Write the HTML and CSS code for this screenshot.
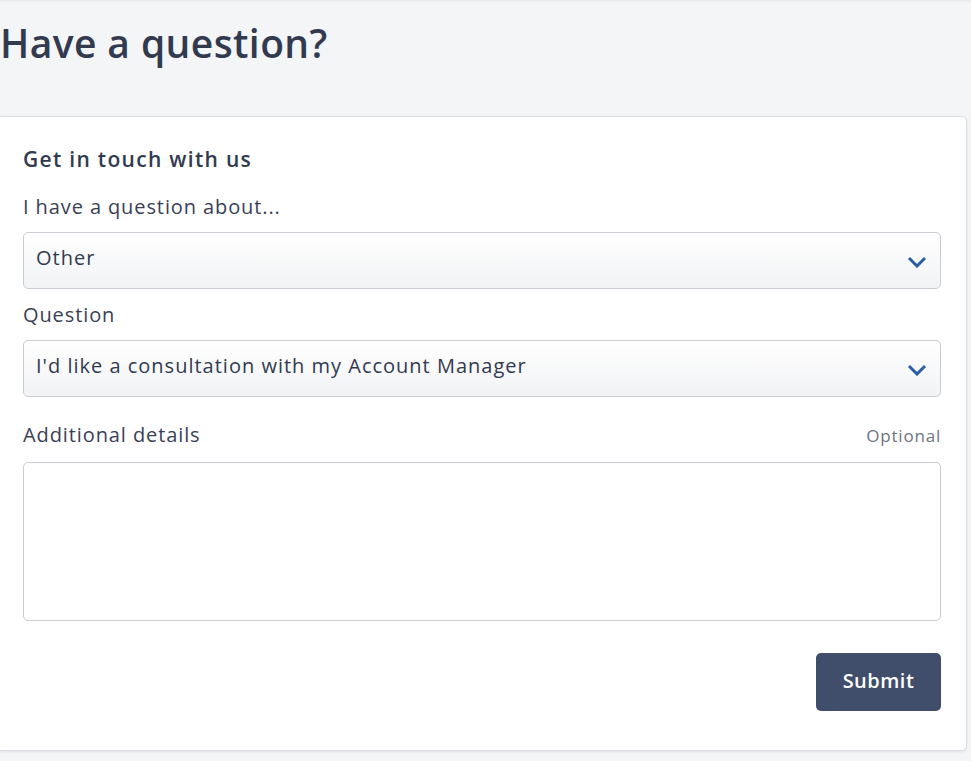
FILE: index.html
```html
<!DOCTYPE html>
<html>
<head>
<meta charset="utf-8">
<link rel="stylesheet" href="styles.css">
</head>
<body>
<div class="page">
  <h1 class="title">Have a question?</h1>
  <form class="card">
    <h2 class="card-title">Get in touch with us</h2>
    <label class="label">I have a question about...</label>
    <div class="select">
      <span>Other</span>
      <svg class="chev" width="20" height="12" viewBox="0 0 20 12"><path d="M2 2 L10 10 L18 2" fill="none" stroke="#2a5caa" stroke-width="3"/></svg>
    </div>
    <label class="label">Question</label>
    <div class="select">
      <span>I'd like a consultation with my Account Manager</span>
      <svg class="chev" width="20" height="12" viewBox="0 0 20 12"><path d="M2 2 L10 10 L18 2" fill="none" stroke="#2a5caa" stroke-width="3"/></svg>
    </div>
    <div class="label-row">
      <label class="label">Additional details</label>
      <span class="optional">Optional</span>
    </div>
    <div class="textarea"></div>
    <div class="actions">
      <button type="button" class="submit">Submit</button>
    </div>
  </form>
</div>
</body>
</html>
```

FILE: styles.css
```css
html, body {
  margin: 0;
  padding: 0;
}
body {
  background: #f4f5f7;
  font-family: "Open Sans", "Noto Sans", sans-serif;
  color: #333b52;
  box-shadow: inset 0 2px 2px -1px rgba(0,0,0,0.08);
  min-height: 761px;
}
.page {
  margin-left: -3px;
  width: 971px;
  padding-top: 18px;
}
.title {
  margin: 0 0 48px 3px;
  font-size: 39px;
  font-weight: 600;
  line-height: 50px;
  color: #323a50;
  letter-spacing: 0.4px;
}
.card {
  display: flex;
  flex-direction: column;
  background: #fff;
  border: 1px solid #dcdee3;
  border-radius: 5px;
  box-shadow: 0 1px 3px rgba(0,0,0,0.08);
  padding: 29px 25px 39px 25px;
  width: 918px;
}
.card-title {
  margin: 0 0 23px 0;
  font-size: 21px;
  font-weight: 600;
  line-height: 26px;
  color: #323a50;
  letter-spacing: 1.3px;
}
.label {
  font-size: 20px;
  line-height: 24px;
  color: #3a3f55;
  margin-bottom: 13px;
  display: block;
  letter-spacing: 0.9px;
}
.select {
  height: 55px;
  border: 1px solid #c9ccd2;
  border-radius: 5px;
  background: linear-gradient(#ffffff, #f2f3f5);
  display: flex;
  align-items: center;
  justify-content: space-between;
  padding: 0 12px;
  font-size: 20px;
  color: #323a50;
  margin-bottom: 14px;
  letter-spacing: 1px;
}
.select span {
  padding-bottom: 6px;
}
.chev {
  margin-right: 1px;
  margin-top: 2px;
}
.label-row {
  display: flex;
  justify-content: space-between;
  align-items: baseline;
  margin-top: 12px;
  margin-bottom: 15px;
}
.label-row .label {
  margin-bottom: 0;
}
.optional {
  font-size: 17px;
  color: #6e7480;
  letter-spacing: 0.8px;
}
.textarea {
  height: 157px;
  border: 1px solid #c9ccd2;
  border-radius: 5px;
  background: #fff;
}
.actions {
  display: flex;
  justify-content: flex-end;
  margin-top: 32px;
}
.submit {
  width: 125px;
  height: 58px;
  border: none;
  border-radius: 5px;
  background: #404e6b;
  color: #fff;
  font-family: "Open Sans", "Noto Sans", sans-serif;
  font-size: 20px;
  font-weight: 600;
  letter-spacing: 0.5px;
  padding-bottom: 4px;
}
```
